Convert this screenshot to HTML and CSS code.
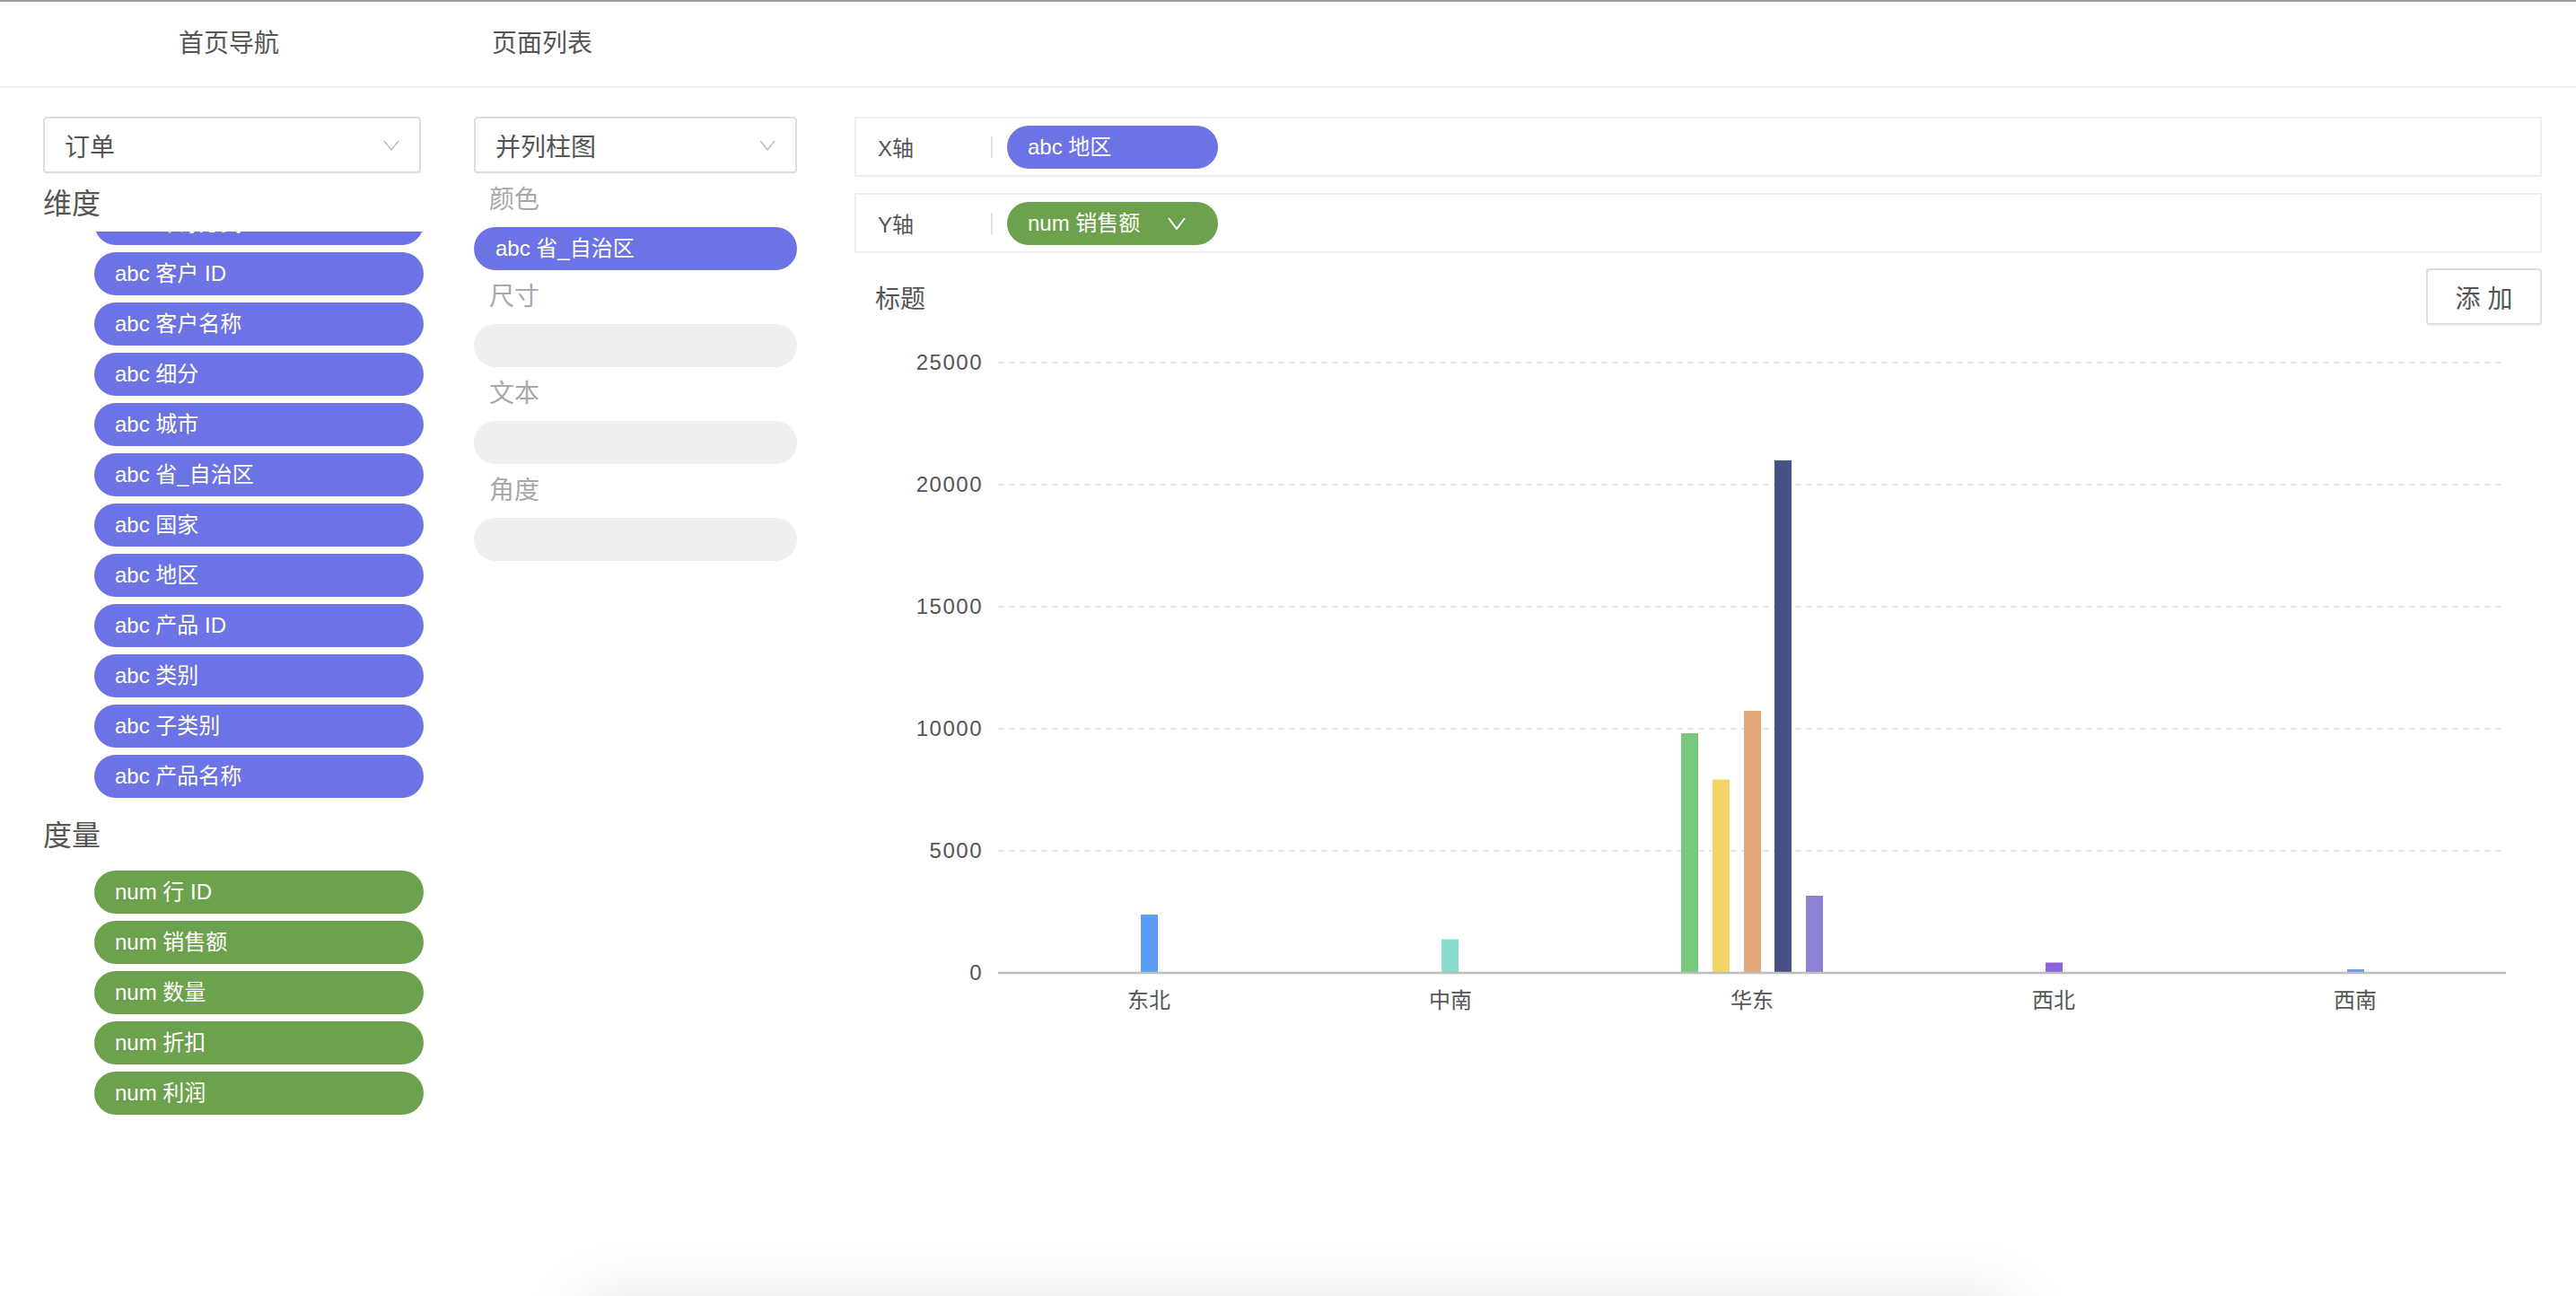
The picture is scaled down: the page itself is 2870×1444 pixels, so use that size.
FILE: index.html
```html
<!DOCTYPE html>
<html lang="zh-CN">
<head>
<meta charset="utf-8">
<title>图表编辑</title>
<link rel="stylesheet" href="styles.css">
</head>
<body>
<header class="topbar">
  <nav class="nav">
    <span class="nav-item">首页导航</span>
    <span class="nav-item">页面列表</span>
  </nav>
</header>

<main class="workspace">
  <section class="col-fields">
    <div class="select">
      <span>订单</span>
      <svg class="chev" viewBox="0 0 18 12"><polyline points="1,1 9,11 17,1"/></svg>
    </div>
    <h2 class="group-title">维度</h2>
    <div class="dim-list">
      <div class="pill dim">abc 邮寄方式</div>
      <div class="pill dim">abc 客户 ID</div>
      <div class="pill dim">abc 客户名称</div>
      <div class="pill dim">abc 细分</div>
      <div class="pill dim">abc 城市</div>
      <div class="pill dim">abc 省_自治区</div>
      <div class="pill dim">abc 国家</div>
      <div class="pill dim">abc 地区</div>
      <div class="pill dim">abc 产品 ID</div>
      <div class="pill dim">abc 类别</div>
      <div class="pill dim">abc 子类别</div>
      <div class="pill dim">abc 产品名称</div>
    </div>
    <h2 class="group-title measure-title">度量</h2>
    <div class="measure-list">
      <div class="pill num">num 行 ID</div>
      <div class="pill num">num 销售额</div>
      <div class="pill num">num 数量</div>
      <div class="pill num">num 折扣</div>
      <div class="pill num">num 利润</div>
    </div>
  </section>

  <section class="col-marks">
    <div class="select">
      <span>并列柱图</span>
      <svg class="chev" viewBox="0 0 18 12"><polyline points="1,1 9,11 17,1"/></svg>
    </div>
    <div class="prop-label">颜色</div>
    <div class="pill dim slot">abc 省_自治区</div>
    <div class="prop-label">尺寸</div>
    <div class="slot empty"></div>
    <div class="prop-label">文本</div>
    <div class="slot empty"></div>
    <div class="prop-label">角度</div>
    <div class="slot empty"></div>
  </section>

  <section class="col-chart">
    <div class="axis-row">
      <span class="axis-label">X轴</span>
      <span class="axis-divider"></span>
      <div class="pill dim axis-pill">abc 地区</div>
    </div>
    <div class="axis-row second">
      <span class="axis-label">Y轴</span>
      <span class="axis-divider"></span>
      <div class="pill num axis-pill">
        <span>num 销售额</span>
        <svg class="pill-chev" viewBox="0 0 20 14"><polyline points="1,1 10,13 19,1"/></svg>
      </div>
    </div>
    <div class="chart-head">
      <span class="chart-title">标题</span>
      <button class="add-btn">添 加</button>
    </div>
    <svg class="chart" viewBox="0 0 1880 770">
      <g class="grid">
        <line x1="160" y1="24" x2="1836" y2="24"/>
        <line x1="160" y1="160" x2="1836" y2="160"/>
        <line x1="160" y1="296" x2="1836" y2="296"/>
        <line x1="160" y1="432" x2="1836" y2="432"/>
        <line x1="160" y1="568" x2="1836" y2="568"/>
      </g>
      <g class="y-labels">
        <text x="143" y="24" dy="0.35em">25000</text>
        <text x="143" y="160" dy="0.35em">20000</text>
        <text x="143" y="296" dy="0.35em">15000</text>
        <text x="143" y="432" dy="0.35em">10000</text>
        <text x="143" y="568" dy="0.35em">5000</text>
        <text x="143" y="704" dy="0.35em">0</text>
      </g>
      <g class="bars">
        <rect x="319" y="639" width="19" height="65" fill="#5b9ef7"/>
        <rect x="654" y="666.5" width="19" height="37.5" fill="#88ddcf"/>
        <rect x="921" y="437" width="19" height="267" fill="#78c97c"/>
        <rect x="956" y="488.5" width="19" height="215.5" fill="#f5d466"/>
        <rect x="991" y="412" width="19" height="292" fill="#e2a77b"/>
        <rect x="1025" y="133" width="19" height="571" fill="#465285"/>
        <rect x="1060" y="618" width="19" height="86" fill="#8983d1"/>
        <rect x="1327" y="692.5" width="19" height="11.5" fill="#8f61dd"/>
        <rect x="1663" y="700" width="19" height="4" fill="#6e9ae3"/>
      </g>
      <line class="baseline" x1="160" y1="704" x2="1840" y2="704"/>
      <g class="x-labels">
        <text x="328" y="735" dy="0.35em">东北</text>
        <text x="664" y="735" dy="0.35em">中南</text>
        <text x="1000" y="735" dy="0.35em">华东</text>
        <text x="1336" y="735" dy="0.35em">西北</text>
        <text x="1672" y="735" dy="0.35em">西南</text>
      </g>
    </svg>
  </section>
</main>

<div class="popup-shadow"></div>
</body>
</html>
```

FILE: styles.css
```css
* { box-sizing: border-box; }

html, body {
  margin: 0;
  padding: 0;
  background: #ffffff;
}

body {
  font-family: "Liberation Sans", "Noto Sans CJK SC", sans-serif;
  color: #555555;
  overflow: hidden;
}

.topbar {
  height: 98px;
  border-top: 2px solid #9e9e9e;
  border-bottom: 2px solid #eeeeee;
  display: flex;
  align-items: center;
}

.nav {
  display: flex;
  gap: 237px;
  padding-left: 199px;
}

.nav-item {
  font-size: 28px;
  line-height: 40px;
  color: #555555;
}

.workspace {
  display: flex;
  align-items: flex-start;
  padding: 32px 38px 0 48px;
}

.col-fields {
  width: 424px;
  flex: none;
}

.col-marks {
  width: 360px;
  flex: none;
  margin-left: 56px;
}

.col-chart {
  flex: 1;
  margin-left: 64px;
  min-width: 0;
}

.select {
  height: 63px;
  border: 2px solid #dcdcdc;
  border-radius: 4px;
  display: flex;
  align-items: center;
  justify-content: space-between;
  padding: 0 22px 0 22px;
  font-size: 28px;
  color: #555555;
  box-shadow: 0 1px 1px rgba(0, 0, 0, 0.03);
}

.col-fields .select {
  width: 421px;
}

.chev {
  width: 18px;
  height: 12px;
  fill: none;
  stroke: #bfbfbf;
  stroke-width: 1.5;
}

.group-title {
  margin: 13px 0 0 0;
  font-size: 32px;
  line-height: 42px;
  font-weight: normal;
  color: #555555;
}

.measure-title {
  margin-top: 21px;
}

.dim-list {
  margin-top: 10px;
  height: 631px;
  overflow: hidden;
  display: flex;
  flex-direction: column;
  justify-content: flex-end;
  gap: 8px;
  padding-left: 57px;
}

.measure-list {
  margin-top: 18px;
  display: flex;
  flex-direction: column;
  gap: 8px;
  padding-left: 57px;
}

.pill {
  flex: none;
  height: 48px;
  border-radius: 24px;
  padding: 0 23px;
  font-size: 24px;
  line-height: 48px;
  color: #ffffff;
  white-space: nowrap;
}

.pill.dim {
  background: #6c73e5;
}

.pill.num {
  background: #6ca24d;
}

.prop-label {
  margin-top: 10px;
  padding-left: 17px;
  font-size: 28px;
  line-height: 40px;
  color: #a8a8a8;
}

.slot {
  margin-top: 10px;
  height: 48px;
  border-radius: 24px;
  padding-left: 24px;
}

.slot.empty {
  background: #efefef;
}

.axis-row {
  height: 67px;
  border: 2px solid #eeeeee;
  display: flex;
  align-items: center;
  padding-left: 24px;
}

.axis-row.second {
  margin-top: 18px;
}

.axis-label {
  width: 126px;
  font-size: 24px;
  color: #555555;
}

.axis-divider {
  width: 2px;
  height: 24px;
  background: #e2e2e2;
  margin-right: 16px;
}

.axis-pill {
  width: 235px;
  display: flex;
  align-items: center;
  gap: 31px;
}

.pill-chev {
  width: 20px;
  height: 14px;
  fill: none;
  stroke: #ffffff;
  stroke-width: 2;
}

.chart-head {
  margin-top: 17px;
  display: flex;
  align-items: center;
  justify-content: space-between;
  padding-left: 23px;
}

.chart-title {
  font-size: 28px;
  color: #555555;
}

.add-btn {
  width: 129px;
  height: 63px;
  border: 2px solid #dddddd;
  border-radius: 4px;
  background: #ffffff;
  font-family: "Liberation Sans", "Noto Sans CJK SC", sans-serif;
  font-size: 28px;
  color: #555555;
  padding: 0;
  box-shadow: 0 2px 2px rgba(0, 0, 0, 0.04);
}

.chart {
  display: block;
  margin-top: 18px;
  width: 1880px;
  height: 770px;
}

.grid line {
  stroke: #e6e6e6;
  stroke-width: 2;
  stroke-dasharray: 7 5;
}

.baseline {
  stroke: #bdbdbd;
  stroke-width: 2.5;
}

.y-labels text {
  font-family: "Liberation Sans", sans-serif;
  font-size: 24px;
  letter-spacing: 1.5px;
  fill: #555555;
  text-anchor: end;
}

.x-labels text {
  font-family: "Noto Sans CJK SC", sans-serif;
  font-size: 24px;
  fill: #555555;
  text-anchor: middle;
}

.popup-shadow {
  position: fixed;
  left: 650px;
  width: 1590px;
  top: 1450px;
  height: 300px;
  border-radius: 8px;
  background: #ffffff;
  box-shadow: 0 0 80px rgba(0, 0, 0, 0.12);
}
```
